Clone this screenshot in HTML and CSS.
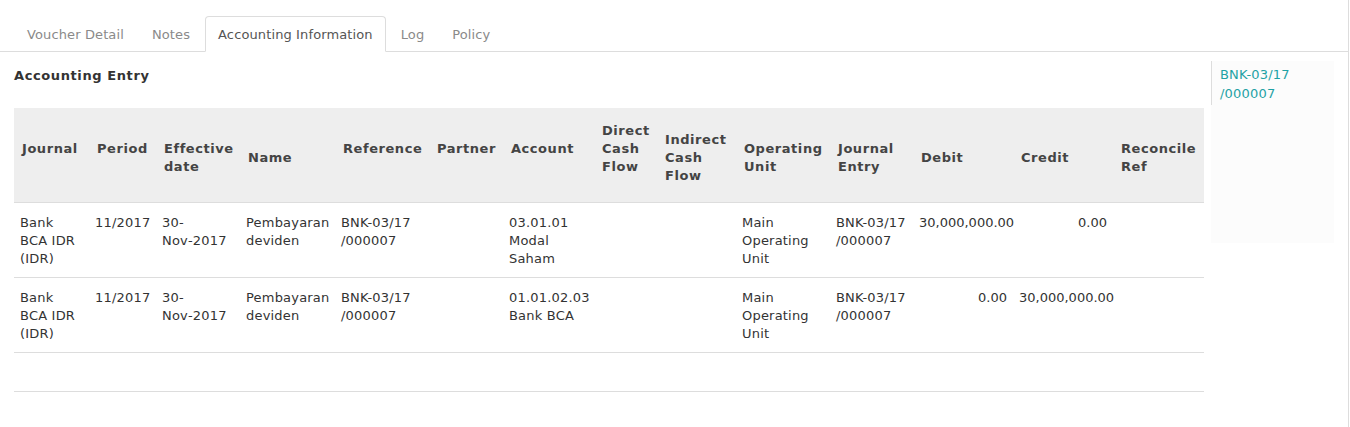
FILE: index.html
```html
<!DOCTYPE html>
<html>
<head>
<meta charset="utf-8">
<link rel="stylesheet" href="styles.css">
</head>
<body>
<div class="page">
  <ul class="tabs">
    <li class="tab">Voucher Detail</li>
    <li class="tab">Notes</li>
    <li class="tab active">Accounting Information</li>
    <li class="tab">Log</li>
    <li class="tab">Policy</li>
  </ul>
  <div class="content">
    <div class="main">
      <h3 class="title">Accounting Entry</h3>
      <table class="grid">
        <colgroup>
          <col style="width:75px"><col style="width:67px"><col style="width:84px"><col style="width:95px"><col style="width:94px"><col style="width:74px"><col style="width:91px"><col style="width:63px"><col style="width:79px"><col style="width:94px"><col style="width:83px"><col style="width:100px"><col style="width:100px"><col style="width:91px">
        </colgroup>
        <thead>
          <tr>
            <th class="up">Journal</th>
            <th class="up">Period</th>
            <th>Effective date</th>
            <th>Name</th>
            <th class="up">Reference</th>
            <th class="up">Partner</th>
            <th class="up">Account</th>
            <th class="up">Direct Cash Flow</th>
            <th>Indirect Cash Flow</th>
            <th>Operating Unit</th>
            <th>Journal Entry</th>
            <th>Debit</th>
            <th>Credit</th>
            <th>Reconcile Ref</th>
          </tr>
        </thead>
        <tbody>
          <tr>
            <td>Bank BCA IDR (IDR)</td>
            <td>11/2017</td>
            <td>30-Nov&#8209;2017</td>
            <td>Pembayaran deviden</td>
            <td>BNK-03/17 /000007</td>
            <td></td>
            <td>03.01.01 Modal Saham</td>
            <td></td>
            <td></td>
            <td>Main Operating Unit</td>
            <td>BNK-03/17 /000007</td>
            <td class="num">30,000,000.00</td>
            <td class="num">0.00</td>
            <td></td>
          </tr>
          <tr>
            <td>Bank BCA IDR (IDR)</td>
            <td>11/2017</td>
            <td>30-Nov&#8209;2017</td>
            <td>Pembayaran deviden</td>
            <td>BNK-03/17 /000007</td>
            <td></td>
            <td>01.01.02.03 Bank BCA</td>
            <td></td>
            <td></td>
            <td>Main Operating Unit</td>
            <td>BNK-03/17 /000007</td>
            <td class="num">0.00</td>
            <td class="num">30,000,000.00</td>
            <td></td>
          </tr>
          <tr class="empty">
            <td>&nbsp;</td><td></td><td></td><td></td><td></td><td></td><td></td><td></td><td></td><td></td><td></td><td></td><td></td><td></td>
          </tr>
        </tbody>
      </table>
    </div>
    <div class="side">
      <div class="side-item">BNK-03/17 /000007</div>
    </div>
  </div>
</div>
</body>
</html>
```

FILE: styles.css
```css
html, body {
  margin: 0;
  padding: 0;
  background: #fff;
}
body {
  font-family: "DejaVu Sans", Verdana, sans-serif;
  font-size: 13px;
  line-height: 18px;
  letter-spacing: 0.2px;
  color: #4c4c4c;
}
.page {
  width: 1348px;
  min-height: 427px;
  border-right: 1px solid #ddd;
}
.tabs {
  list-style: none;
  margin: 0;
  padding: 16px 0 0 14px;
  display: flex;
  border-bottom: 1px solid #ddd;
}
.tab {
  padding: 9px 12px 7px;
  margin-right: 2px;
  margin-bottom: -1px;
  border: 1px solid transparent;
  border-radius: 4px 4px 0 0;
  color: #8a8a8a;
  letter-spacing: 0.12px;
  white-space: nowrap;
}
.tab.active {
  border-color: #ddd;
  border-bottom-color: #fff;
  background: #fff;
  color: #555;
}
.content {
  display: flex;
  align-items: flex-start;
}
.main {
  margin-left: 14px;
  width: 1190px;
}
.title {
  margin: 15px 0 23px;
  font-size: 13px;
  line-height: 18px;
  font-weight: bold;
  letter-spacing: 0.6px;
  color: #333;
}
.grid {
  table-layout: fixed;
  width: 1190px;
  border-collapse: collapse;
  border-spacing: 0;
}
.grid th {
  background: #eee;
  text-align: left;
  font-weight: bold;
  letter-spacing: 0.55px;
  color: #444;
  padding: 14px 4px 8px 8px;
  vertical-align: middle;
  border-bottom: 1px solid #ddd;
}
.grid th.up::after {
  content: "";
  display: block;
  height: 18px;
}
.grid td {
  padding: 11px 6px 9px 6px;
  vertical-align: top;
  border-bottom: 1px solid #ddd;
  color: #333;
}
.grid td.num {
  text-align: right;
  white-space: nowrap;
  letter-spacing: 0;
}
.side {
  margin-left: 7px;
  margin-top: 9px;
  width: 123px;
  height: 182px;
  background: #fcfcfc;
}
.side-item {
  border-left: 1px solid #ddd;
  padding: 4px 8px 2px;
  line-height: 19px;
  color: #1fa2a5;
}
```
